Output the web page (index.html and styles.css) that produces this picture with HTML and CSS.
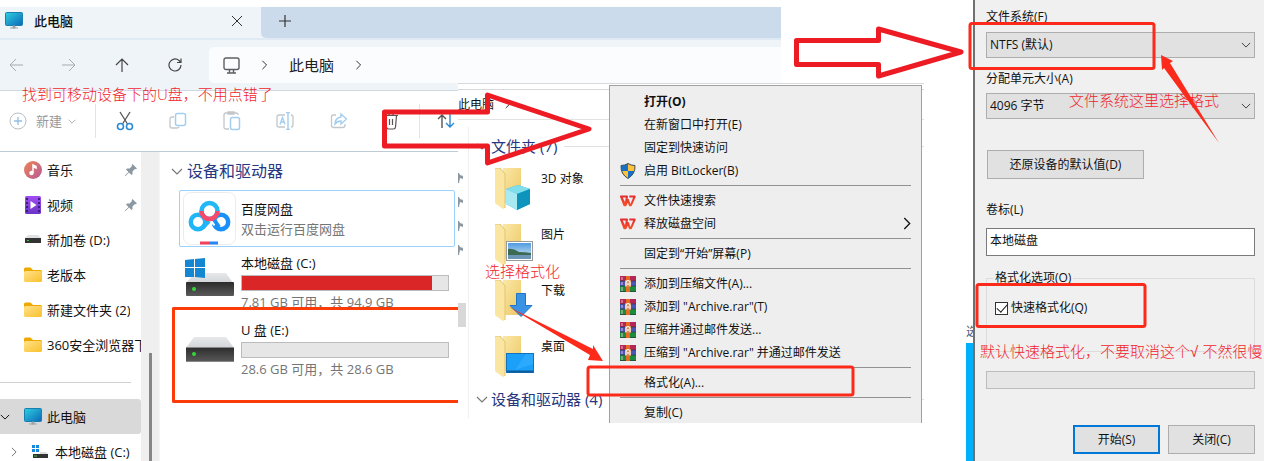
FILE: index.html
```html
<!DOCTYPE html>
<html lang="zh-CN">
<head>
<meta charset="utf-8">
<title>U盘格式化步骤</title>
<link rel="stylesheet" href="styles.css">
</head>
<body>
<svg width="0" height="0" class="defs" aria-hidden="true">
  <defs>
    <linearGradient id="screen" x1="0" y1="0" x2="1" y2="1"><stop offset="0" stop-color="#2fd0e0"/><stop offset="1" stop-color="#0a68b8"/></linearGradient>
    <linearGradient id="yellow" x1="0" y1="0" x2="1" y2="1"><stop offset="0" stop-color="#ffe28a"/><stop offset="1" stop-color="#f9c02c"/></linearGradient>
    <linearGradient id="fold" x1="0" y1="0" x2="1" y2="1"><stop offset="0" stop-color="#fbe7a4"/><stop offset="1" stop-color="#ecc866"/></linearGradient>
    <linearGradient id="note" x1="0" y1="0" x2="1" y2="1"><stop offset="0" stop-color="#ee8352"/><stop offset="1" stop-color="#b65a9a"/></linearGradient>
    <linearGradient id="film" x1="0" y1="0" x2="0" y2="1"><stop offset="0" stop-color="#a04cf0"/><stop offset="1" stop-color="#6c35c8"/></linearGradient>
    <linearGradient id="lid" x1="0" y1="0" x2="0" y2="1"><stop offset="0" stop-color="#e6e8ea"/><stop offset="1" stop-color="#d2d5d8"/></linearGradient>
    <linearGradient id="case" x1="0" y1="0" x2="0" y2="1"><stop offset="0" stop-color="#2b2b2b"/><stop offset="1" stop-color="#5a5a5a"/></linearGradient>
    <linearGradient id="sky" x1="0" y1="0" x2="0" y2="1"><stop offset="0" stop-color="#4f9be0"/><stop offset="1" stop-color="#dcecf6"/></linearGradient>
    <linearGradient id="flame" x1="0" y1="0" x2="0" y2="1"><stop offset="0" stop-color="#e52f2f"/><stop offset="1" stop-color="#f5502a"/></linearGradient>
    <symbol id="pc" viewBox="0 0 18 17"><rect x=".5" y=".5" width="17" height="13" rx="1" fill="url(#screen)" stroke="#1a7fae"/><path d="M8 14h2v2H8zM5 16h8" stroke="#9aa6ad" fill="#9aa6ad"/></symbol>
    <symbol id="folder" viewBox="0 0 18 16"><path d="M0 3V2q0-1.500 1.500-1.500h5L9 3h7.500Q18 3 18 4.500V8H0z" fill="#eda900"/><path d="M0 5.500Q0 4 1.500 4h15Q18 4 18 5.500v8q0 1.500-1.500 1.500h-15Q0 15 0 13.500z" fill="url(#yellow)"/></symbol>
    <symbol id="pin" viewBox="0 0 12 12"><path d="M7.500 0 12 4.500l-1.500.8-.6-.2L7.500 7.500v2.600l-1 .9L4 8.500.5 12H0v-.5L3.500 8 1 5.500l1-1h2.600L7 2.100l-.3-.9z" fill="#8b97a1"/></symbol>
    <symbol id="pincut" viewBox="0 0 5 10"><path d="M0 0h1l1 2 3 1v3L2 5 1 10H0z" fill="#8b97a1"/></symbol>
    <symbol id="drive" viewBox="0 0 48 26"><path d="M8 1h32l8 11H0z" fill="url(#lid)"/><rect y="11" width="48" height="15" rx="1" fill="url(#case)"/><path d="M0 11.500h48M0 25.500h48" stroke="#888"/><circle cx="8" cy="18" r="2" fill="#33d63a"/></symbol>
    <symbol id="bigfolder" viewBox="0 0 40 42"><path d="M8 0h18v35H8z" fill="url(#fold)"/><path d="M0 0h5l5 6v34l-2 1-8-6z" fill="#fae6a0"/><path d="M0 0h5l5 6v34" fill="none" stroke="#e3c575"/></symbol>
    <symbol id="wps" viewBox="0 0 16 12"><path d="M1 1.500h6L5.500 10.200zM1 1.500 4.300 10.200h1.400L8.300 4.200M9.300 1.500h5.400L11 10.200H9.800L8 5" fill="none" stroke="url(#flame)" stroke-width="2" stroke-linejoin="round"/></symbol>
    <symbol id="rar" viewBox="0 0 16 16"><path d="M0 0h16v5H0z" fill="#b52656"/><path d="M0 5h16v5H0z" fill="#4b55b8"/><path d="M0 10h16v6H0z" fill="#1d8b3c"/><path d="M0 5h16M0 10h16M0 15.500h16" stroke="#293b40" stroke-width=".7"/><path d="M2 1v3M2 6v3M2 11v4" stroke="#e0bfd0"/><path d="M6 0h4v16H6z" fill="#e46d22"/><path d="M5 4h6v7H5z" fill="#d98b54"/><path d="M6 10V6q2-3 4 0v4M8 7v2" stroke="#fff" fill="none" stroke-width="1.200"/></symbol>
    <symbol id="chev" viewBox="0 0 12 7"><path d="m1 1 5 5 5-5" fill="none" stroke="currentColor" stroke-width="1.200"/></symbol>
    <symbol id="chevr" viewBox="0 0 7 12"><path d="m1 1 5 5-5 5" fill="none" stroke="currentColor" stroke-width="1.200"/></symbol>
  </defs>
</svg>

<main class="stage">
  <section class="explorer">
    <div class="tabs">
      <div class="tab">
        <svg width="18" height="17"><use href="#pc"/></svg>
        <span class="tab-title">此电脑</span>
        <button class="plain" aria-label="关闭标签页"><svg width="12" height="12" viewBox="0 0 12 12"><path d="m1 1 10 10M11 1 1 11" stroke="#333"/></svg></button>
      </div>
      <div class="tab-rest"><button class="plain" aria-label="新标签页"><svg width="12" height="12" viewBox="0 0 12 12"><path d="M6 0v12M0 6h12" stroke="#333" stroke-width="1.200"/></svg></button></div>
    </div>
    <nav class="navbar">
      <div class="nav-buttons">
        <button class="plain" aria-label="后退"><svg width="14" height="14" viewBox="0 0 14 14" fill="none" stroke="#a5abb0"><path d="M14 7H1M7 1 1 7l6 6"/></svg></button>
        <button class="plain" aria-label="前进"><svg width="14" height="14" viewBox="0 0 14 14" fill="none" stroke="#a5abb0"><path d="M0 7h13M7 1l6 6-6 6"/></svg></button>
        <button class="plain" aria-label="上移"><svg width="14" height="14" viewBox="0 0 14 14" fill="none" stroke="#444" stroke-width="1.200"><path d="M7 14V1M1 7l6-6 6 6"/></svg></button>
        <button class="plain" aria-label="刷新"><svg width="14" height="14" viewBox="0 0 14 14" fill="none" stroke="#444" stroke-width="1.200"><path d="M13 7A6 6 0 1 1 11 2.500L13 4.500M13 .5v4H9"/></svg></button>
      </div>
      <div class="address">
        <svg width="17" height="17" viewBox="0 0 17 17" fill="none" stroke="#5b5f63" stroke-width="1.400"><rect x="1" y="1" width="15" height="11.500" rx="2"/><path d="M6.500 13v2.500M10.500 13v2.500M4 16h9"/></svg>
        <svg class="dark" width="7" height="10"><use href="#chevr"/></svg>
        <span>此电脑</span>
        <svg class="dark" width="7" height="10"><use href="#chevr"/></svg>
      </div>
    </nav>
    <div class="toolbar">
      <button class="plain new"><svg width="18" height="18" viewBox="0 0 18 18" fill="none"><circle cx="9" cy="9" r="8" stroke="#b9bec3"/><path d="M9 5v8M5 9h8" stroke="#8fbfe6" stroke-width="1.300"/></svg>新建<svg width="8" height="5"><use href="#chev"/></svg></button>
      <span class="rule"></span>
      <div class="tools">
        <button class="plain" aria-label="剪切"><svg width="18" height="20" viewBox="0 0 18 20" fill="none"><path d="m4 1 7.500 12M14 1 6.500 13" stroke="#555" stroke-width="1.300"/><circle cx="4.500" cy="15.500" r="3" stroke="#2a8ad4" stroke-width="1.600"/><circle cx="13.500" cy="15.500" r="3" stroke="#2a8ad4" stroke-width="1.600"/></svg></button>
        <button class="plain" aria-label="复制"><svg width="18" height="18" viewBox="0 0 18 18" fill="none"><path d="M5 5H3Q1 5 1 7v7q0 2 2 2h5q2 0 2-1.500" stroke="#c3c7ca" stroke-width="1.300"/><rect x="6.500" y="1.500" width="10" height="12" rx="2" stroke="#a4cdf0" stroke-width="1.500"/></svg></button>
        <button class="plain" aria-label="粘贴"><svg width="18" height="20" viewBox="0 0 18 20" fill="none"><path d="M6 18H3q-2 0-2-2V4q0-2 2-2h10q2 0 2 2M5 3V1h6v2z" stroke="#c3c7ca" stroke-width="1.300"/><rect x="7.500" y="6.500" width="9" height="12" rx="2" stroke="#a4cdf0" stroke-width="1.500"/></svg></button>
        <button class="plain" aria-label="重命名"><svg width="18" height="18" viewBox="0 0 18 18" fill="none"><path d="M9 3H3Q1 3 1 5v8q0 2 2 2h6M15 3q2 0 2 2v8q0 2-2 2" stroke="#c3c7ca" stroke-width="1.300"/><path d="M12 0v18M10 .5h4M10 17.500h4M4 12.500 6.500 5.500 9 12.500M5 10h3" stroke="#a4cdf0" stroke-width="1.400"/></svg></button>
        <button class="plain" aria-label="共享"><svg width="18" height="18" viewBox="0 0 18 18" fill="none"><path d="M6 3H3.500Q1.500 3 1.500 5v8q0 2.500 2 2.500h9q2.500 0 2.500-2V12" stroke="#c3c7ca" stroke-width="1.300"/><path d="m11 2 5.500 5-5.500 5V9q-4 0-6 3 0-6 6-7z" stroke="#a4cdf0" stroke-width="1.400"/></svg></button>
        <button class="plain" aria-label="删除"><svg width="16" height="18" viewBox="0 0 16 18" fill="none" stroke="#555" stroke-width="1.200"><path d="M1 3.500h14M5.500 3Q8-.5 10.500 3M2.500 4l1 11q.2 2 2 2h5q1.800 0 2-2l1-11M6.500 7v6M9.500 7v6"/></svg></button>
      </div>
      <span class="rule"></span>
      <button class="plain sort" aria-label="排序"><svg width="18" height="14" viewBox="0 0 18 14" fill="none" stroke-width="1.400"><path d="M5 14V1M1 5l4-4 4 4" stroke="#555"/><path d="M13 0v13M9 9l4 4 4-4" stroke="#2a8ad4"/></svg></button>
    </div>
    <div class="explorer-body">
      <aside class="sidebar">
        <ul class="side-list">
          <li><svg width="18" height="18" viewBox="0 0 18 18"><circle cx="9" cy="9" r="9" fill="url(#note)"/><path d="M9 12V4l3 1.500v1.500L9.800 6" stroke="#fff" fill="none" stroke-width="1.500"/><circle cx="7.500" cy="12" r="2.200" fill="#fff"/></svg><span>音乐</span><svg class="pin" width="12" height="12"><use href="#pin"/></svg></li>
          <li><svg width="18" height="18" viewBox="0 0 18 18"><rect x="1" width="16" height="18" rx="1.500" fill="url(#film)"/><path d="M3 2v14M15 2v14" stroke="#3b1d7c" stroke-width="2" stroke-dasharray="2 2"/><path d="m6.500 5 6 4-6 4z" fill="#fff"/></svg><span>视频</span><svg class="pin" width="12" height="12"><use href="#pin"/></svg></li>
          <li><svg width="18" height="9" viewBox="0 0 18 9"><path d="M4 0h10l3 3H1z" fill="#dfe2e4"/><rect x="1" y="3" width="16" height="5" fill="#333"/><path d="M3 5.500h2" stroke="#3c3"/></svg><span>新加卷 (D:)</span></li>
          <li><svg width="18" height="16"><use href="#folder"/></svg><span>老版本</span></li>
          <li><svg width="18" height="16"><use href="#folder"/></svg><span>新建文件夹 (2)</span></li>
          <li><svg width="18" height="16"><use href="#folder"/></svg><span>360安全浏览器下载</span></li>
        </ul>
        <hr class="side-rule">
        <ul class="tree">
          <li class="current"><svg width="10" height="6"><use href="#chev"/></svg><svg class="tree-icon" width="18" height="17"><use href="#pc"/></svg><span>此电脑</span></li>
          <li class="child"><svg width="6" height="10"><use href="#chevr"/></svg><svg width="17" height="14" viewBox="0 0 17 14"><path d="M1 0h3v3H1zM5 0h3v3H5zM1 4h3v3H1zM5 4h3v3H5z" fill="#1689dc"/><path d="M2 9h15v4H2z" fill="#333"/><path d="M9 7h6l2 2H9z" fill="#ddd"/><path d="M3 11h3" stroke="#3c3"/></svg><span>本地磁盘 (C:)</span></li>
        </ul>
      </aside>
      <div class="side-scroll"><span class="thumb"></span></div>
      <div class="files">
        <h2 class="group"><svg width="12" height="7"><use href="#chev"/></svg>设备和驱动器</h2>
        <article class="app">
          <svg width="53" height="53" viewBox="0 0 53 53" fill="none"><rect x=".5" y=".5" width="52" height="52" rx="7" fill="#fff" stroke="#ececec"/><g stroke-width="4.500"><circle cx="15" cy="30" r="7.200" stroke="#1fb6f7"/><circle cx="38" cy="30" r="7.200" stroke="#1991f8"/><path d="M20 35 29 26" stroke="#1fb6f7"/><path d="m27 28 5 5" stroke="#fff" stroke-width="3"/><path d="m30 26 6 9" stroke="#1991f8" stroke-width="4"/><circle cx="26.500" cy="19" r="8" stroke="#22b8f6"/><path d="M18.500 19a8 8 0 0 0 16 0" stroke="#f6496c"/></g><path d="M17 51h9" stroke="#ee4363" stroke-width="3"/><path d="M26 51h9" stroke="#2a86f3" stroke-width="3"/></svg>
          <div><p class="name">百度网盘</p><p class="sub">双击运行百度网盘</p></div>
        </article>
        <article class="disk">
          <svg width="50" height="40" viewBox="0 0 50 40"><path d="M10 16h31l7 10H1z" fill="url(#lid)"/><rect x="1" y="25" width="48" height="14" rx="1" fill="url(#case)"/><circle cx="9" cy="32" r="2" fill="#33d63a"/><path d="M0 3l9-1v8H0zM10 2l10-1v9H10zM0 11h9v9H0zM10 11h10v10l-10-1z" fill="#1587d2"/></svg>
          <div class="disk-info"><p class="name">本地磁盘 (C:)</p><progress value="92" max="100" aria-label="本地磁盘 (C:) 已用空间"></progress><p class="sub">7.81 GB 可用，共 94.9 GB</p></div>
        </article>
        <article class="disk usb">
          <svg width="50" height="26"><use href="#drive"/></svg>
          <div class="disk-info"><p class="name">U 盘 (E:)</p><progress value="0" max="100" aria-label="U 盘 (E:) 已用空间"></progress><p class="sub">28.6 GB 可用，共 28.6 GB</p></div>
        </article>
        <span class="usb-mark"></span>
      </div>
    </div>
    <p class="hint hint-usb">找到可移动设备下的U盘，不用点错了</p>
  </section>

  <section class="classic">
    <div class="classic-bar">此电脑<svg width="5" height="9"><use href="#chevr"/></svg></div>
    <div class="classic-body">
      <div class="edge">
        <svg width="5" height="10"><use href="#pincut"/></svg>
        <svg width="5" height="10"><use href="#pincut"/></svg>
        <svg width="5" height="10"><use href="#pincut"/></svg>
        <svg width="5" height="10"><use href="#pincut"/></svg>
        <span class="edge-thumb"></span>
      </div>
      <div class="folders">
        <h2 class="group small"><svg width="12" height="7"><use href="#chev"/></svg>文件夹 (7)</h2>
        <ul class="folder-list">
          <li><svg width="40" height="44" viewBox="0 0 40 44"><use href="#bigfolder" width="40" height="42"/><path d="m23 17 12 4v15l-13 6-11-6V21z" fill="#2fb3d4"/><path d="m11 21 12-4 12 4-13 5z" fill="#7fdeea"/><path d="m11 21 11 5v16l-11-6z" fill="#a9eaf2"/><path d="m35 21-13 5v16l13-6z" fill="#0c94bd"/></svg><span>3D 对象</span></li>
          <li><svg width="40" height="44" viewBox="0 0 40 44"><use href="#bigfolder" width="40" height="42"/><rect x="11.500" y="17.500" width="26" height="19" fill="#fff" stroke="#999"/><path d="M13 19h23v16H13z" fill="url(#sky)"/><path d="M13 25q5-1 11 3 6 0 12 1v6H13z" fill="#3c6a52"/><path d="M13 31h23v4H13z" fill="#6c96b6"/></svg><span>图片</span></li>
          <li><svg width="40" height="44" viewBox="0 0 40 44"><use href="#bigfolder" width="40" height="42"/><path d="M21.500 13.500h9v12h6.500l-11 11-11-11h6.500z" fill="#3b93e4" stroke="#1f74c6"/></svg><span>下载</span></li>
          <li><svg width="40" height="44" viewBox="0 0 40 44"><use href="#bigfolder" width="40" height="42"/><rect x="11.500" y="17.500" width="27" height="19" fill="#1ba0fa" stroke="#1372ba"/><path d="M12 35.500h26" stroke="#0c5c9c" stroke-width="2"/><path d="M31 18h7v10L20 34z" fill="#3cb1ff" opacity=".5"/></svg><span>桌面</span></li>
        </ul>
        <h2 class="group small"><svg width="12" height="7"><use href="#chev"/></svg>设备和驱动器 (4)</h2>
      </div>
    </div>
    <p class="hint hint-format">选择格式化</p>
    <div class="menu" role="menu">
      <button role="menuitem" class="strong"><i></i>打开(O)</button>
      <button role="menuitem"><i></i>在新窗口中打开(E)</button>
      <button role="menuitem"><i></i>固定到快速访问</button>
      <button role="menuitem"><i><svg width="16" height="16" viewBox="0 0 16 16"><path d="M8 .5Q11 2.500 15 2.500 15.500 11 8 15.500.5 11 1 2.500 5 2.500 8 .5z" fill="#1671c6"/><path d="M8 .5Q11 2.500 15 2.500V8H8zM8 8v7.500Q2 12 1.200 8z" fill="#fdc13b"/><path d="M8 .5Q11 2.500 15 2.500 15.500 11 8 15.500.5 11 1 2.500 5 2.500 8 .5z" fill="none" stroke="#3d5061"/></svg></i>启用 BitLocker(B)</button>
      <hr>
      <button role="menuitem"><i><svg width="16" height="12"><use href="#wps"/></svg></i>文件快速搜索</button>
      <button role="menuitem"><i><svg width="16" height="12"><use href="#wps"/></svg></i>释放磁盘空间<svg class="more" width="8" height="13"><use href="#chevr"/></svg></button>
      <hr>
      <button role="menuitem"><i></i>固定到“开始”屏幕(P)</button>
      <hr>
      <button role="menuitem"><i><svg width="16" height="16"><use href="#rar"/></svg></i>添加到压缩文件(A)...</button>
      <button role="menuitem"><i><svg width="16" height="16"><use href="#rar"/></svg></i>添加到 "Archive.rar"(T)</button>
      <button role="menuitem"><i><svg width="16" height="16"><use href="#rar"/></svg></i>压缩并通过邮件发送...</button>
      <button role="menuitem"><i><svg width="16" height="16"><use href="#rar"/></svg></i>压缩到 "Archive.rar" 并通过邮件发送</button>
      <hr>
      <button role="menuitem"><i></i>格式化(A)...</button>
      <hr>
      <button role="menuitem"><i></i>复制(C)</button>
    </div>
  </section>

  <section class="right">
    <div class="behind"><span>选</span></div>
    <form class="dialog">
      <label for="fs">文件系统(F)</label>
      <div class="combo"><select id="fs"><option>NTFS (默认)</option></select><svg width="10" height="6"><use href="#chev"/></svg></div>
      <label for="unit">分配单元大小(A)</label>
      <div class="combo"><select id="unit"><option>4096 字节</option></select><svg width="10" height="6"><use href="#chev"/></svg></div>
      <button type="button" class="btn restore">还原设备的默认值(D)</button>
      <label for="vol">卷标(L)</label>
      <input id="vol" class="text" type="text" value="本地磁盘">
      <fieldset>
        <legend>格式化选项(O)</legend>
        <label class="check"><input type="checkbox" checked>快速格式化(Q)</label>
      </fieldset>
      <progress class="job" value="0" max="100" aria-label="格式化进度"></progress>
      <div class="actions"><button type="button" class="btn primary">开始(S)</button><button type="button" class="btn">关闭(C)</button></div>
      <p class="hint hint-fs">文件系统这里选择格式</p>
      <p class="hint hint-quick">默认快速格式化，不要取消这个<span class="tick">√ </span>不然很慢</p>
    </form>
  </section>

  <svg class="marks" viewBox="0 0 1266 461" preserveAspectRatio="none" fill="none" aria-hidden="true">
    <g stroke="#ed1c24" stroke-width="5" stroke-linejoin="round">
      <path d="M384.500 112h103V95L589 129 487.500 163v-17h-103z"/>
      <path d="M796.500 40.500h82V29L961 52l-82.500 24V64.500h-82z"/>
    </g>
    <g stroke="#fb2a1b" stroke-width="3">
      <rect x="970" y="23.500" width="184" height="45" rx="2"/>
      <rect x="977" y="284.500" width="168" height="42" rx="2"/>
      <rect x="588" y="367" width="265" height="28" rx="2"/>
    </g>
    <g fill="#fb2a1b">
      <path d="M507 306 593 349v-4l10 16-15-1 2-5z"/>
      <path d="M1219 143 1164 68l-2 2-1-15 12 6-3 2z"/>
    </g>
  </svg>
</main>
</body>
</html>
```

FILE: styles.css
```css
* { box-sizing: border-box; }
body {
  margin: 0;
  background: #fff;
  color: #111;
  font-family: "Open Sans", "Noto Sans CJK SC", sans-serif;
  font-size: 12px;
  line-height: 18px;
}
p, h2, ul, hr, fieldset { margin: 0; padding: 0; }
ul { list-style: none; }
svg { flex: none; display: block; }
button, select, input { font: inherit; color: inherit; }
.defs { position: absolute; }
.plain { border: 0; background: none; padding: 0; display: flex; align-items: center; }
.dark { color: #333; }

.stage {
  position: relative;
  display: grid;
  grid-template-columns: minmax(0, 458fr) minmax(0, 323fr) minmax(0, 143fr) minmax(0, 42fr) minmax(0, 298fr) minmax(0, 2fr);
  grid-template-rows: minmax(461px, 100vh);
  max-height: 100vh;
  overflow: hidden;
}

/* Windows 11 explorer */
.explorer {
  grid-area: 1 / 1 / 2 / 3;
  position: relative;
  display: flex;
  flex-direction: column;
  min-height: 0;
  padding-top: 7px;
}
.tabs { display: flex; height: 31px; background: #eff4f9; }
.tab { display: flex; align-items: center; width: 261px; padding: 0 18px 4px 5px; gap: 11px; font-size: 13px; font-weight: 500; }
.tab .plain { margin-left: auto; }
.tab-rest { flex: 1; display: flex; align-items: center; padding: 0 0 3px 18px; background: #ccdbeb; border-bottom-left-radius: 5px; }
.navbar { display: flex; height: 53px; border-top: 2px solid #e0eaf4; border-bottom: 1px solid #cfd9e2; background: #eff4f9; padding: 7px 0; }
.nav-buttons { display: flex; align-items: center; gap: 39px; width: 209px; padding-left: 9px; }
.address { flex: 1; display: flex; align-items: center; gap: 21px; padding-left: 14px; background: #fbfcfe; border-radius: 5px 0 0 5px; font-size: 15px; color: #222; }
.toolbar { display: flex; align-items: center; height: 61px; border-bottom: 1px solid #bccbd6; padding-left: 9px; }
.new { gap: 9px; width: 86px; font-size: 13px; color: #999; white-space: nowrap; }
.new svg:last-child { margin-left: -3px; }
.rule { width: 1px; height: 34px; background: #e3e3e3; }
.tools { display: flex; justify-content: space-between; width: 323px; padding: 0 20px; }
.sort { padding-left: 17px; }

.explorer-body { display: flex; flex: 1; min-height: 0; overflow: hidden; }
.sidebar { width: 141px; font-size: 13px; white-space: nowrap; overflow: hidden; }
.side-list li { display: flex; align-items: center; gap: 5px; height: 35px; padding-left: 24px; }
.side-list span { overflow: hidden; }
.pin { margin: 0 4px 0 auto; }
.side-rule { border: 0; height: 1px; margin: 20px 10px 16px 0; background: #d0d0d0; }
.tree li { display: flex; align-items: center; height: 35px; }
.current { background: #d9d9d9; gap: 5px; border-radius: 0 3px 3px 0; }
.tree-icon { margin-left: 9px; }
.child { padding-left: 11px; gap: 7px; }
.child svg:first-child { color: #777; margin-right: 7px; }
.side-scroll { width: 18px; background: #efefef; padding: 201px 0 0 8px; }
.thumb { display: block; width: 3px; height: 100%; background: #868686; }
.files { position: relative; width: 299px; padding-left: 11px; border-left: 1px solid #f5f5f5; }
.group { display: flex; align-items: center; gap: 4px; height: 38px; font-size: 16px; font-weight: 400; color: #27377f; white-space: nowrap; }
.group svg { color: #777; }
.app { display: flex; align-items: center; gap: 5px; height: 57px; margin: 0 3px 7px 8px; padding: 0 3px; border: 1px solid #99d1ff; border-radius: 2px; font-size: 13px; line-height: 20px; }
.name { color: #111; }
.sub { color: #757575; }
.disk { display: flex; align-items: flex-start; gap: 6px; height: 57px; margin: 0 9px 10px 14px; font-size: 13px; }
.disk > svg { margin-top: 3px; }
.usb > svg { margin-top: 15px; }
.disk-info { flex: 1; white-space: nowrap; }
progress { appearance: none; display: block; width: 100%; border: 1px solid #bcbcbc; background: #e6e6e6; }
progress::-webkit-progress-bar { background: #e6e6e6; }
progress::-webkit-progress-value { background: #da2626; }
.disk progress { height: 16px; margin: 3px 0 2px; }
.usb-mark { position: absolute; left: 12px; right: 0; top: 155px; height: 96px; border: 3px solid #fb3c08; border-right: 0; border-radius: 2px 0 0 2px; }

/* Windows 10 explorer */
.classic { grid-area: 1 / 2 / 2 / 4; position: relative; height: 340px; margin-top: 83px; background: #fff; border-top: 1px solid #d9d9d9; overflow: hidden; }
.classic-bar { display: flex; align-items: center; gap: 11px; height: 31px; margin-top: 5px; border-top: 1px solid #d9d9d9; border-bottom: 1px solid #e2e2e2; }
.classic-body { display: flex; }
.edge { display: flex; flex-direction: column; gap: 14px; width: 10px; padding-top: 53px; }
.edge-thumb { width: 8px; height: 24px; margin-top: 34px; background: #d8d8d8; }
.folders { flex: 1; margin-top: 7px; border-left: 1px solid #f0f0f0; padding-left: 7px; }
.group.small { height: 38px; font-size: 15px; gap: 3px; }
.group.small::after { content: ""; flex: 1; height: 1px; margin-left: 4px; background: #e2e2e2; }
.folder-list { padding: 3px 0 0 19px; }
.folder-list li { display: flex; gap: 6px; height: 56px; }
.folder-list li:last-child { height: 44px; }
.folder-list span { padding-top: 2px; }
.menu { position: absolute; top: 1px; left: 151px; width: 313px; padding: 4px 10px; background: #eee; border: 1px solid #a0a0a0; }
.menu button { display: flex; align-items: center; gap: 8px; width: 100%; height: 23px; border: 0; padding: 0; background: none; white-space: nowrap; }
.menu i { display: flex; width: 16px; }
.menu .strong { font-weight: 700; }
.menu hr { border: 0; height: 1px; margin: 3px 0; background: #919191; }
.menu .more { margin: 0 0 0 auto; }

/* Format dialog */
.right { grid-area: 1 / 5 / 2 / 6; display: flex; }
.behind { width: 7px; padding-top: 323px; overflow: hidden; color: #4a5a78; display: flex; flex-direction: column; }
.behind::after { content: ""; flex: 1; margin-top: 2px; background: #00b0fa; }
.dialog { position: relative; flex: 1; display: flex; flex-direction: column; padding: 8px 9px 7px 11px; border-left: 2px solid #707070; background: #f0f0f0; }
.combo { position: relative; display: grid; height: 26px; margin: 6px 0 12px; }
.combo + label + .combo { margin-top: 5px; }
.combo select { appearance: none; border: 1px solid #adadad; border-radius: 0; background: #e1e1e1; padding: 0 3px; }
.combo svg { position: absolute; right: 4px; top: 10px; color: #444; }
.combo + .btn { margin-top: 19px; }
.btn { height: 29px; border: 1px solid #adadad; border-radius: 0; background: #e1e1e1; padding: 0; }
.restore { width: 157px; margin: 0 0 22px 1px; }
.text { height: 28px; margin: 9px 0 13px; border: 1px solid #7a7a7a; border-radius: 0; padding: 0 3px 5px; background: #fff; }
fieldset { height: 83px; border: 1px solid #dcdcdc; padding: 12px 8px 0; }
legend { padding: 0 2px; margin-left: -2px; }
.check { display: flex; align-items: center; gap: 3px; }
.check input { appearance: none; width: 13px; height: 13px; margin: 0; border: 1px solid #333; background: #fff; display: grid; place-items: center; }
.check input:checked::before { content: ""; width: 9px; height: 5px; border: solid #222; border-width: 0 0 1px 1px; transform: rotate(-48deg); margin-bottom: 3px; }
.job { height: 18px; margin-top: 19px; }
.actions { display: flex; justify-content: flex-end; gap: 8px; margin-top: auto; }
.actions .btn { width: 87px; }
.btn.primary { border: 2px solid #0078d7; }

/* Red annotations */
.hint { position: absolute; font-size: 15px; font-weight: 300; line-height: 20px; color: #f0262d; white-space: nowrap; }
.hint-usb { left: 22px; top: 84px; }
.hint-format { left: 27px; top: 177px; }
.hint-fs { left: 94px; top: 90px; }
.hint-quick { left: 5px; top: 341px; }
.tick { font-family: "Liberation Sans", sans-serif; font-weight: 400; }
.marks { position: absolute; left: 0; top: 0; width: 100%; height: 461px; pointer-events: none; }
```
